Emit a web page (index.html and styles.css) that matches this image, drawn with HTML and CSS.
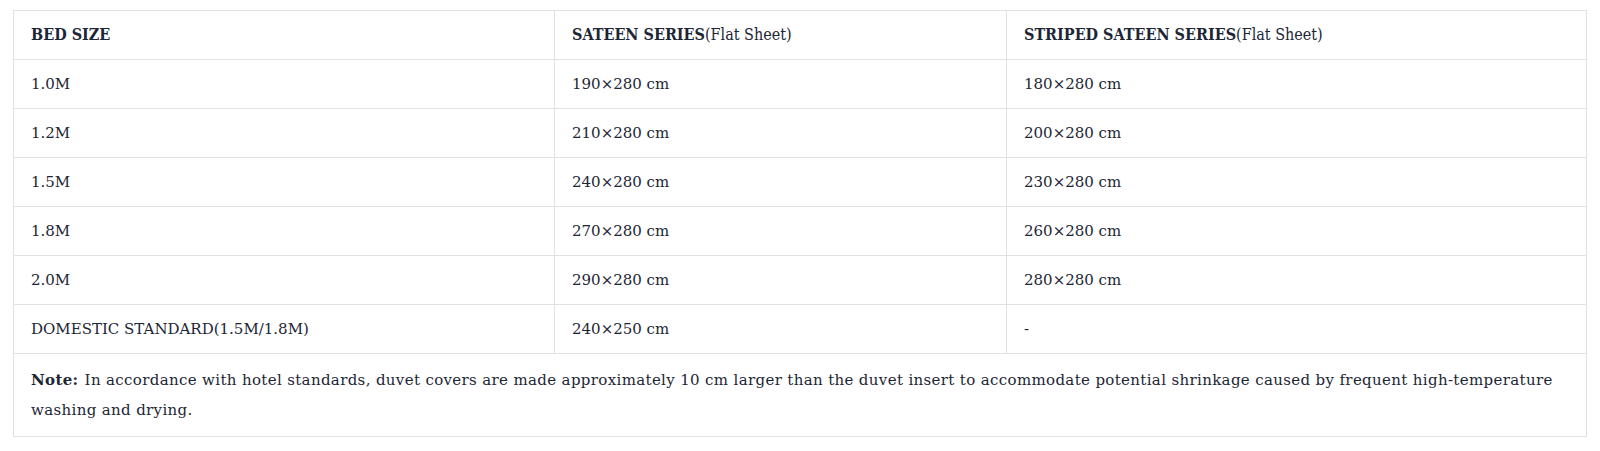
FILE: index.html
```html
<!DOCTYPE html>
<html>
<head>
<meta charset="utf-8">
<link rel="stylesheet" href="styles.css">
</head>
<body>
<div class="wrap">
<table class="size-table">
<colgroup>
<col class="c1"><col class="c2"><col class="c3">
</colgroup>
<thead>
<tr><th>BED SIZE</th><th>SATEEN SERIES<span class="sub">(Flat Sheet)</span></th><th>STRIPED SATEEN SERIES<span class="sub">(Flat Sheet)</span></th></tr>
</thead>
<tbody>
<tr><td>1.0M</td><td>190×280 cm</td><td>180×280 cm</td></tr>
<tr><td>1.2M</td><td>210×280 cm</td><td>200×280 cm</td></tr>
<tr><td>1.5M</td><td>240×280 cm</td><td>230×280 cm</td></tr>
<tr><td>1.8M</td><td>270×280 cm</td><td>260×280 cm</td></tr>
<tr><td>2.0M</td><td>290×280 cm</td><td>280×280 cm</td></tr>
<tr><td>DOMESTIC STANDARD(1.5M/1.8M)</td><td>240×250 cm</td><td>-</td></tr>
<tr class="note-row"><td colspan="3"><strong>Note:</strong> In accordance with hotel standards, duvet covers are made approximately 10 cm larger than the duvet insert to accommodate potential shrinkage caused by frequent <span class="nowrap">high-temperature</span> washing and drying.</td></tr>
</tbody>
</table>
</div>
</body>
</html>
```
FILE: styles.css
```css
html, body {
  margin: 0;
  padding: 0;
  background: #ffffff;
}
.wrap {
  padding: 10px 0 0 13px;
}
.size-table {
  width: 1573px;
  border-collapse: collapse;
  table-layout: fixed;
  font-family: "DejaVu Serif", serif;
  font-size: 15px;
  color: #1d2634;
}
.c1 { width: 541px; }
.c2 { width: 452px; }
.c3 { width: 580px; }
.size-table th,
.size-table td {
  border: 1px solid #e2e2e2;
  text-align: left;
  padding: 9px 17px;
  line-height: 30px;
  vertical-align: middle;
}
.size-table th {
  font-weight: bold;
  font-stretch: condensed;
  font-size: 16px;
}
.size-table .sub {
  font-weight: normal;
}
.note-row td {
  padding: 11px 17px;
  letter-spacing: 0.35px;
}
.note-row strong {
  margin-right: 1px;
}
.nowrap {
  white-space: nowrap;
}
```
